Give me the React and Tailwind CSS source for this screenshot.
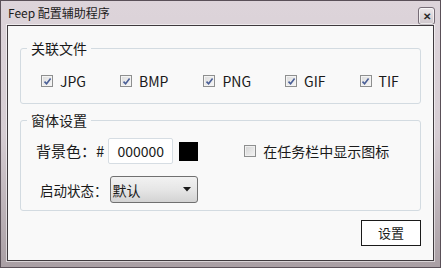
import React from "react";

const FONT = { fontFamily: '"Noto Sans CJK SC", "Noto Sans", sans-serif' };

function Check({ checked }) {
  return (
    <span className="flex h-[12px] w-[12px] items-center justify-center border border-[#8e8f8f] bg-gradient-to-br from-[#dcdcdc] to-[#f7f7f7] shadow-[inset_0_0_0_1px_#f4f4f4]">
      {checked && (
        <svg width="9" height="9" viewBox="0 0 9 9">
          <path d="M1.5 4.6 L3.6 6.8 L7.6 1.6" fill="none" stroke="#4a5f97" strokeWidth="1.6" />
        </svg>
      )}
    </span>
  );
}

function Item({ label, ml }) {
  return (
    <div className={`flex items-center ${ml}`}>
      <Check checked />
      <span className="ml-[7px] text-[14px] leading-[20px] text-[#1a1a1a]">{label}</span>
    </div>
  );
}

export default function App() {
  return (
    <div
      className="flex h-[268px] w-[441px] flex-col bg-gradient-to-b from-[#ddd4da] via-[#d6cdd3] to-[#a99fa4] border border-[#5a5058]"
      style={FONT}
    >
      <div className="flex h-[24px] items-center justify-between pl-[7px] pr-[5px]">
        <span className="text-[12px] leading-[16px] text-[#1c1c1c]">Feep 配置辅助程序</span>
        <div className="mt-[5px] flex h-[18px] w-[17px] items-center justify-center rounded-[3px] border border-[#766c76] bg-gradient-to-b from-[#ece7ea] to-[#cfc7cc] shadow-[inset_0_0_0_1px_rgba(255,255,255,0.6)]">
          <span className="text-[10px] font-bold leading-none text-[#2a2a2a]">✕</span>
        </div>
      </div>
      <div className="mx-[6px] flex h-[236px] flex-col border border-[#3f3a3e] bg-[#f9f9f9] px-[12px] shadow-[0_0_0_1px_rgba(255,255,255,0.55)]">
        <fieldset className="mt-[13px] h-[65px] rounded-[3px] border border-[#d3dbe1] px-[6px]">
          <legend className="px-[4px] text-[14px] leading-[18px] text-[#1a1a1a]">关联文件</legend>
          <div className="mt-[14px] flex items-center">
            <Item label="JPG" ml="ml-[14px]" />
            <Item label="BMP" ml="ml-[34px]" />
            <Item label="PNG" ml="ml-[35px]" />
            <Item label="GIF" ml="ml-[34px]" />
            <Item label="TIF" ml="ml-[34px]" />
          </div>
        </fieldset>
        <fieldset className="mt-[7px] h-[100px] rounded-[3px] border border-[#d3dbe1] px-[6px]">
          <legend className="px-[4px] text-[14px] leading-[18px] text-[#1a1a1a]">窗体设置</legend>
          <div className="mt-[9px] flex items-center">
            <span className="ml-[9px] text-[15px] leading-[20px] text-[#1a1a1a]">背景色：#</span>
            <div className="ml-[4px] flex h-[26px] w-[65px] items-center justify-center rounded-[2px] border border-[#d6dde3] bg-white text-[14px] text-[#1a1a1a]">
              000000
            </div>
            <div className="ml-[6px] h-[19px] w-[19px] bg-black" />
            <div className="ml-[46px] flex items-center">
              <span className="flex h-[12px] w-[12px] border border-[#8e8f8f] bg-gradient-to-br from-[#d4d4d4] to-[#f4f4f4] shadow-[inset_0_0_0_1px_#f0f0f0]" />
              <span className="ml-[7px] text-[14px] leading-[20px] text-[#1a1a1a]">在任务栏中显示图标</span>
            </div>
          </div>
          <div className="mt-[12px] flex items-center">
            <span className="ml-[13px] text-[13.5px] leading-[20px] text-[#1a1a1a]">启动状态：</span>
            <div className="ml-[2px] flex h-[27px] w-[88px] items-center justify-between rounded-[3px] border border-[#707070] bg-gradient-to-b from-[#f2f2f2] via-[#e6e6e6] to-[#d3d3d3] pl-[2px] pr-[6px]">
              <span className="text-[14px] leading-[20px] text-[#1a1a1a]">默认</span>
              <svg width="8" height="5" viewBox="0 0 8 5">
                <path d="M0 0 H8 L4 4.5 Z" fill="#1a1a1a" />
              </svg>
            </div>
          </div>
        </fieldset>
        <div className="mt-[9px] flex justify-end">
          <div className="flex h-[26px] w-[60px] items-center justify-center border border-[#1a1a1a] bg-white text-[13px] text-[#1a1a1a]">
            设置
          </div>
        </div>
      </div>
    </div>
  );
}
